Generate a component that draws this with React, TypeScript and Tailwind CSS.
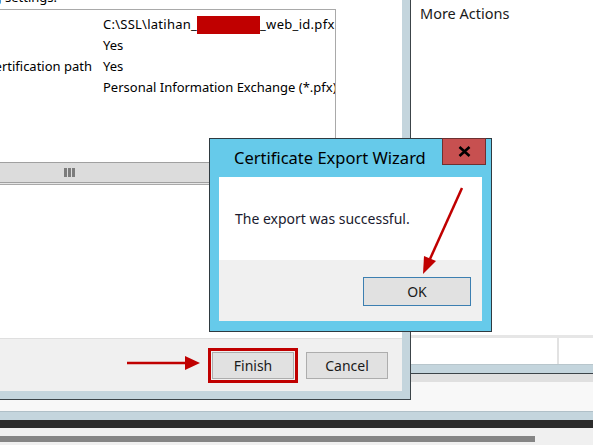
import React from "react";

export default function App() {
  return (
    <div className="relative w-[593px] h-[445px] overflow-hidden bg-white font-['Noto_Sans',sans-serif] text-black">
      <div className="flex flex-col w-full h-full">
        {/* main row */}
        <div className="flex h-[411px] bg-[#f8f8f8]">
          {/* wizard window */}
          <div className="w-[411px] h-[400px] shrink-0 bg-[#c4d5dd] pr-[8px] pb-[8px] border-r border-b border-[#3c4449] flex flex-col">
            <div className="relative flex-1 flex flex-col bg-white">
              <div className="flex-1 flex flex-col">
                {/* cut heading */}
                <div className="h-[9px] overflow-hidden">
                  <div className="w-[57px] flex justify-end mt-[-12px]">
                    <span className="whitespace-nowrap text-[13px] leading-[18px]">You have specified the following settings:</span>
                  </div>
                </div>
                {/* list box */}
                <div className="w-[336px] border-t border-r border-b border-[#a9a9a9] flex flex-col bg-white">
                  <div className="h-[152px] overflow-hidden pt-[4px] text-[13px] leading-[21px]">
                    <div className="flex h-[21px] whitespace-nowrap">
                      <div className="w-[103px] shrink-0" />
                      <div className="flex items-center">
                        <span className="tracking-[0.25px]">C:\SSL\latihan_</span>
                        <span className="inline-block w-[63px] h-[18px] bg-[#c00000]" />
                        <span className="tracking-[0.3px]">_web_id.pfx</span>
                      </div>
                    </div>
                    <div className="flex h-[21px] whitespace-nowrap">
                      <div className="w-[103px] shrink-0" />
                      <span>Yes</span>
                    </div>
                    <div className="flex h-[21px] whitespace-nowrap">
                      <div className="w-[103px] shrink-0 flex justify-end pr-[11px]">
                        <span className="whitespace-nowrap">Include all certificates in the certification path</span>
                      </div>
                      <span>Yes</span>
                    </div>
                    <div className="flex h-[21px] whitespace-nowrap">
                      <div className="w-[103px] shrink-0" />
                      <span>Personal Information Exchange (*.pfx)</span>
                    </div>
                  </div>
                  {/* horizontal scrollbar */}
                  <div className="h-[21px] bg-[#dcdcdc] border-t border-b border-[#a0a0a0] flex items-center pl-[64px]">
                    <div className="flex gap-[1px]">
                      <div className="w-[3px] h-[9px] bg-[#7c7c7c]" />
                      <div className="w-[3px] h-[9px] bg-[#7c7c7c]" />
                      <div className="w-[3px] h-[9px] bg-[#7c7c7c]" />
                    </div>
                  </div>
                  <div className="h-[1px] bg-[#e6e6e6]" />
                </div>
              </div>
              {/* footer */}
              <div className="h-[53px] border-t border-[#dfdfdf] bg-[#f0f0f0] flex justify-end items-start pt-[13px] pr-[14px] gap-[12px] text-[14px] text-[#1a1a1a]">
                <button className="w-[82px] h-[27px] bg-[#e1e1e1] border border-[#adadad] flex items-center justify-center outline-solid outline-[3px] outline-[#c00000] outline-offset-1">
                  Finish
                </button>
                <button className="w-[82px] h-[27px] bg-[#e1e1e1] border border-[#adadad] flex items-center justify-center">
                  Cancel
                </button>
              </div>
            </div>
          </div>
          {/* right panel */}
          <div className="flex-1 flex flex-col">
            <div className="h-[335px] bg-white pl-[9px] pt-[1px]">
              <span className="text-[14.5px] leading-[20px] text-[#1a1a1a]">More Actions</span>
            </div>
            <div className="h-[3px] bg-[#e6e6e6]" />
            <div className="h-[26px] bg-white flex">
              <div className="w-[148px] border-r-2 border-[#e2e2e2]" />
              <div className="flex-1" />
            </div>
            <div className="h-[1px] bg-[#b8c6cc]" />
            <div className="h-[8px] bg-[#c4d5dd]" />
            <div className="h-[1px] bg-[#3c4449]" />
            <div className="h-[8px] bg-[#e0e0e0]" />
            <div className="flex-1 bg-[#f8f8f8]" />
          </div>
        </div>
        {/* bottom bands */}
        <div className="h-[1px] bg-[#b0c0c8]" />
        <div className="h-[8px] bg-[#c4d5dd]" />
        <div className="h-[8px] bg-[#2b2b2b]" />
        <div className="h-[17px] bg-[#f0f0f0] pt-[8px]">
          <div className="w-[535px] h-[6px] bg-[#858585]" />
        </div>
      </div>

      {/* dialog */}
      <div className="absolute left-[209px] top-[138px] w-[283px] h-[194px] border border-[#2f3a40] bg-[#66caea] flex flex-col">
        <div className="h-[38px] flex items-start">
          <div className="flex-1 h-full flex items-center pl-[24px]">
            <span className="text-[16.5px] leading-[22px] text-black">Certificate Export Wizard</span>
          </div>
          <div className="mt-[-1px] mr-[5px] w-[44px] h-[27px] bg-[#c75050] border border-[#6e3030] flex items-center justify-center">
            <svg width="13" height="11" viewBox="0 0 13 11">
              <path d="M1.5 1 L11.5 10 M11.5 1 L1.5 10" stroke="#000" strokeWidth="2.6" />
            </svg>
          </div>
        </div>
        <div className="mx-[9px] h-[83px] bg-white flex items-center pl-[16px]">
          <span className="text-[14px] leading-[20px] text-[#1a1a2e]">The export was successful.</span>
        </div>
        <div className="mx-[9px] h-[61px] bg-[#f0f0f0] flex justify-end items-start pt-[17px] pr-[11px]">
          <button className="w-[108px] h-[29px] bg-[#e1e1e1] border border-[#3c7fb1] flex items-center justify-center text-[14px] text-[#1a1a1a]">
            OK
          </button>
        </div>
      </div>

      {/* annotation arrows */}
      <svg className="absolute left-0 top-0 pointer-events-none" width="593" height="445" viewBox="0 0 593 445">
        <line x1="127" y1="363" x2="187" y2="363" stroke="#c00000" strokeWidth="2.5" />
        <polygon points="185,356 200,363 185,370" fill="#c00000" />
        <line x1="462" y1="188" x2="430" y2="259" stroke="#c00000" strokeWidth="2.5" />
        <polygon points="423,274 424,256 436,261" fill="#c00000" />
      </svg>
    </div>
  );
}
